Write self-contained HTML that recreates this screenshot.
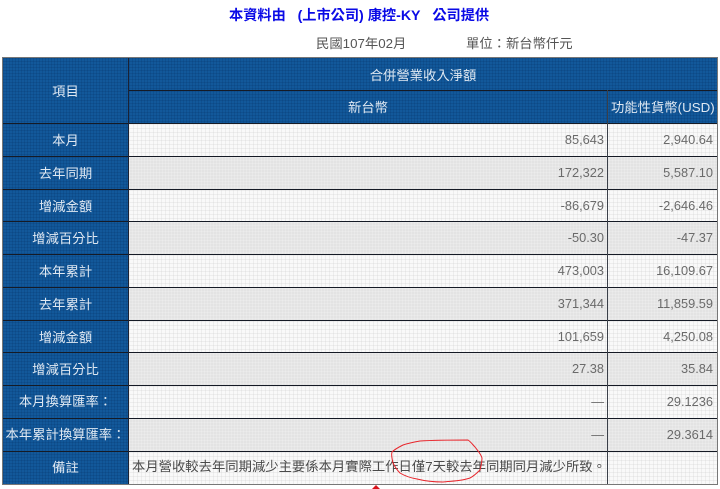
<!DOCTYPE html>
<html><head><meta charset="utf-8"><style>
html,body{margin:0;padding:0;background:#fff;width:720px;height:489px;overflow:hidden}
body{position:relative;font-family:"Liberation Sans","Noto Sans CJK TC",sans-serif;font-size:13.33px;color:#555}
.t{position:absolute;white-space:nowrap;line-height:16px}
.c{position:absolute;box-sizing:border-box;white-space:nowrap}
.b{background-color:#12589a;background-image:linear-gradient(rgba(0,30,80,.14) 1px,transparent 1px),linear-gradient(90deg,rgba(0,30,80,.14) 1px,transparent 1px);background-size:3px 3px}
.l{background-color:#f9f9f9;background-image:linear-gradient(rgba(190,190,190,.2) 1px,transparent 1px),linear-gradient(90deg,rgba(190,190,190,.2) 1px,transparent 1px);background-size:4px 4px}
.g{background-color:#e3e3e3;background-image:linear-gradient(rgba(255,255,255,.18) 1px,transparent 1px),linear-gradient(90deg,rgba(255,255,255,.18) 1px,transparent 1px);background-size:3px 3px}
.w{color:#dfe8f2;text-align:center;line-height:32px;height:32px}
.n{text-align:right;line-height:32px;height:32px;color:#6a6a6a;padding-right:3px;font-size:12.8px}
.h{position:absolute;height:1px;background:#151a25}
.v{position:absolute;width:1px;background:#1a2235}
</style></head><body>
<div class="t" style="left:229px;top:8px;color:#0a0ae6;font-weight:bold;font-size:14.2px">本資料由&nbsp;&nbsp;&nbsp;(上市公司) 康控-KY&nbsp;&nbsp;&nbsp;公司提供</div>
<div class="t" style="left:316px;top:36px">民國107年02月</div>
<div class="t" style="left:466px;top:36px">單位：新台幣仟元</div>

<div class="c" style="left:2px;top:57px;width:716px;height:428px;background:#777"></div>
<div class="c b" style="left:3px;top:58px;width:714px;height:66px"></div>
<div class="c b" style="left:3px;top:124px;width:126px;height:360px"></div>

<div class="c l" style="left:129px;top:124px;width:588px;height:32px"></div>
<div class="c g" style="left:129px;top:157px;width:588px;height:32px"></div>
<div class="c l" style="left:129px;top:190px;width:588px;height:32px"></div>
<div class="c g" style="left:129px;top:222px;width:588px;height:32px"></div>
<div class="c l" style="left:129px;top:255px;width:588px;height:32px"></div>
<div class="c g" style="left:129px;top:288px;width:588px;height:32px"></div>
<div class="c l" style="left:129px;top:321px;width:588px;height:32px"></div>
<div class="c g" style="left:129px;top:353px;width:588px;height:32px"></div>
<div class="c l" style="left:129px;top:386px;width:588px;height:32px"></div>
<div class="c g" style="left:129px;top:419px;width:588px;height:32px"></div>
<div class="c l" style="left:129px;top:452px;width:588px;height:32px"></div>

<div class="h" style="left:129px;top:90px;width:588px"></div>
<div class="h" style="left:3px;top:123px;width:714px"></div>
<div class="h" style="left:3px;top:156px;width:714px"></div>
<div class="h" style="left:3px;top:189px;width:714px"></div>
<div class="h" style="left:3px;top:221px;width:714px"></div>
<div class="h" style="left:3px;top:254px;width:714px"></div>
<div class="h" style="left:3px;top:287px;width:714px"></div>
<div class="h" style="left:3px;top:320px;width:714px"></div>
<div class="h" style="left:3px;top:352px;width:714px"></div>
<div class="h" style="left:3px;top:385px;width:714px"></div>
<div class="h" style="left:3px;top:418px;width:714px"></div>
<div class="h" style="left:3px;top:451px;width:714px"></div>
<div class="v" style="left:128px;top:58px;height:426px"></div>
<div class="v" style="left:607px;top:90px;height:394px;background:#3a3f48"></div>

<div class="c w" style="left:3px;top:76px;width:125px">項目</div>
<div class="c w" style="left:129px;top:60px;width:588px">合併營業收入淨額</div>
<div class="c w" style="left:129px;top:92px;width:478px">新台幣</div>
<div class="c w" style="left:608px;top:92px;width:109px;text-align:left;padding-left:3px">功能性貨幣(USD)</div>

<div class="c w" style="left:3px;top:125px;width:125px">本月</div>
<div class="c w" style="left:3px;top:158px;width:125px">去年同期</div>
<div class="c w" style="left:3px;top:191px;width:125px">增減金額</div>
<div class="c w" style="left:3px;top:223px;width:125px">增減百分比</div>
<div class="c w" style="left:3px;top:256px;width:125px">本年累計</div>
<div class="c w" style="left:3px;top:289px;width:125px">去年累計</div>
<div class="c w" style="left:3px;top:322px;width:125px">增減金額</div>
<div class="c w" style="left:3px;top:354px;width:125px">增減百分比</div>
<div class="c w" style="left:3px;top:386px;width:125px">本月換算匯率：</div>
<div class="c w" style="left:3px;top:419px;width:125px">本年累計換算匯率：</div>
<div class="c w" style="left:3px;top:452px;width:125px">備註</div>

<div class="c n" style="left:129px;top:124px;width:478px">85,643</div>
<div class="c n" style="left:608px;top:124px;width:109px;padding-right:4px">2,940.64</div>
<div class="c n" style="left:129px;top:157px;width:478px">172,322</div>
<div class="c n" style="left:608px;top:157px;width:109px;padding-right:4px">5,587.10</div>
<div class="c n" style="left:129px;top:190px;width:478px">-86,679</div>
<div class="c n" style="left:608px;top:190px;width:109px;padding-right:4px">-2,646.46</div>
<div class="c n" style="left:129px;top:222px;width:478px">-50.30</div>
<div class="c n" style="left:608px;top:222px;width:109px;padding-right:4px">-47.37</div>
<div class="c n" style="left:129px;top:255px;width:478px">473,003</div>
<div class="c n" style="left:608px;top:255px;width:109px;padding-right:4px">16,109.67</div>
<div class="c n" style="left:129px;top:288px;width:478px">371,344</div>
<div class="c n" style="left:608px;top:288px;width:109px;padding-right:4px">11,859.59</div>
<div class="c n" style="left:129px;top:321px;width:478px">101,659</div>
<div class="c n" style="left:608px;top:321px;width:109px;padding-right:4px">4,250.08</div>
<div class="c n" style="left:129px;top:353px;width:478px">27.38</div>
<div class="c n" style="left:608px;top:353px;width:109px;padding-right:4px">35.84</div>
<div class="c n" style="left:129px;top:386px;width:478px">—</div>
<div class="c n" style="left:608px;top:386px;width:109px;padding-right:4px">29.1236</div>
<div class="c n" style="left:129px;top:419px;width:478px">—</div>
<div class="c n" style="left:608px;top:419px;width:109px;padding-right:4px">29.3614</div>
<div class="t" style="left:132px;top:459px;color:#4a4a4a">本月營收較去年同期減少主要係本月實際工作日僅7天較去年同期同月減少所致。</div>

<svg style="position:absolute;left:0;top:0" width="720" height="489" viewBox="0 0 720 489">
<path d="M392 452C395 449 399 447 403 445C409 443 414 442 420 441C436 440 452 440 468 440C471 442 473 445 475 447C478 451 481 454 482 458C482 462 481 466 480 470C477 473 474 476 470 478C462 481 452 481 443 482C434 482 425 481 417 479C411 478 405 476 400 473C397 470 395 467 393 463C392 459 391 455 392 452Z" fill="none" stroke="#e8252b" stroke-width="1"/>
<path d="M376 485L372 489H380Z" fill="#d8141c"/>
</svg>
</body></html>
